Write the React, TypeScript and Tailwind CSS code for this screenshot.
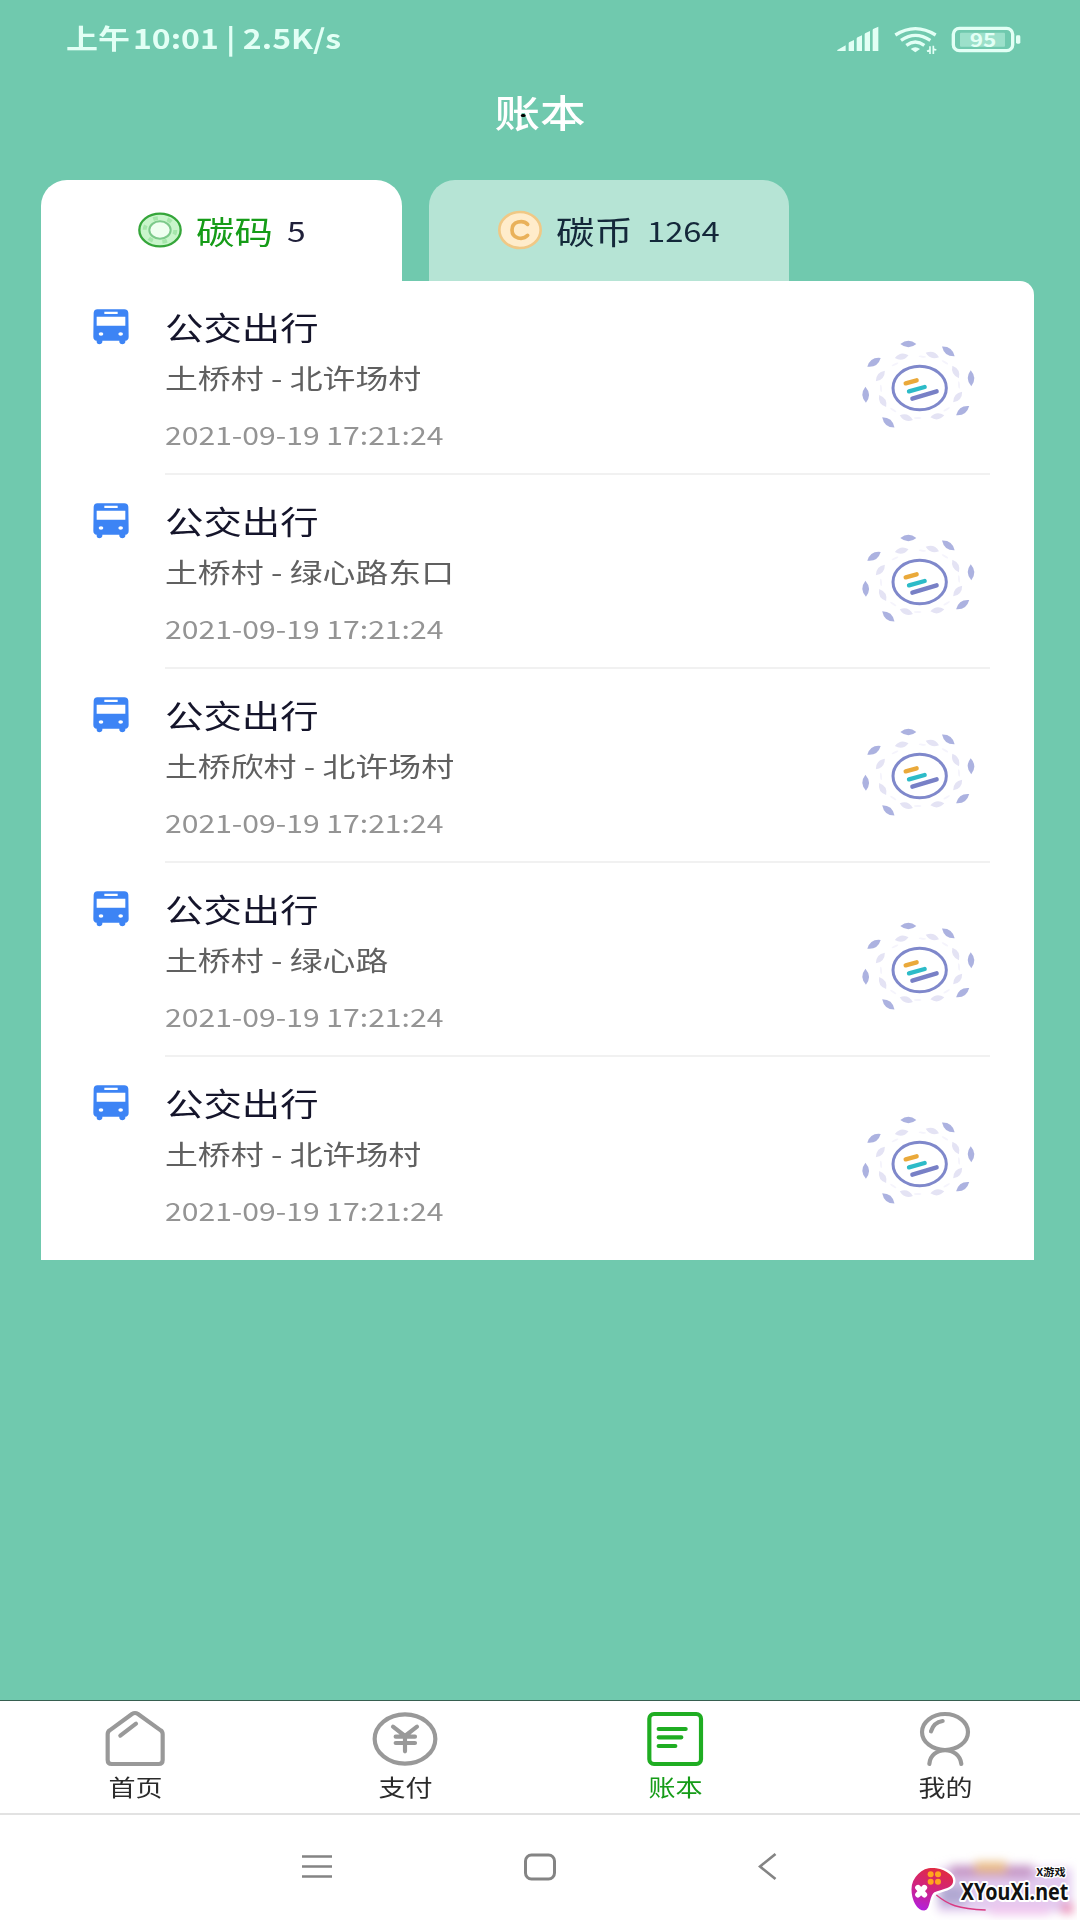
import React from "react";

const FONT = "font-['Noto_Sans_CJK_SC','Noto_Sans',sans-serif]";

function Wide({ className = "", children }: { className?: string; children: React.ReactNode }) {
  return <span className={`block w-max whitespace-nowrap origin-left scale-x-[1.2] ${className}`}>{children}</span>;
}

function StatusBar() {
  return (
    <header className="flex h-[80px] items-start text-[#e2fff5]">
      <div className="ml-[66px] mt-[18px] w-[771px] text-[27px] leading-[40px] font-bold">
        <span className="block w-max origin-left scale-x-[1.185] whitespace-nowrap"><span className="mr-[2.5px]">上午</span>10:01 | 2.5K/s</span>
      </div>
      <svg className="mt-[26px] h-[26px] w-[42px]" viewBox="111 78 126 78" fill="currentColor">
        <path d="M112 150l25-14v17h-21q-6 0-4-3zM146 130q0-3 3-4l13-6v33h-16zM170 116q0-3 3-4l13-6v47h-16zM194 103q0-3 3-4l13-6v60h-16zM218 90q0-3 3-4l14-6v73h-17z" />
      </svg>
      <svg className="ml-[15px] mt-[26px] h-[30px] w-[44px]" viewBox="281 78 132 90" fill="none" stroke="currentColor" strokeWidth="10">
        <path d="M285 105Q345 67 406 105M302 121Q345 91 390 121M318 136Q345 116 372 136" />
        <path d="M331 147q14-10 28 0l-14 10z" fill="currentColor" stroke="none" />
        <path d="M389 139v23M399 137v25M380 154l9-4M399 147l9 3" strokeWidth="5" />
      </svg>
      <svg className="ml-[13px] mt-[26px] h-[28px] w-[70px]" viewBox="453 78 210 84" fill="none">
        <rect x="460" y="85" width="178" height="67" rx="18" stroke="currentColor" strokeWidth="10" />
        <rect x="480" y="98" width="135" height="42" rx="3" fill="#9ce0ca" />
        <rect x="648" y="106" width="13" height="25" rx="4" fill="currentColor" />
        <text x="549" y="140" textAnchor="middle" fontSize="55" fontWeight="700" textLength="80" lengthAdjust="spacingAndGlyphs" fill="currentColor" fontFamily="Noto Sans CJK SC">95</text>
      </svg>
    </header>
  );
}

function CarbonIcon() {
  return (
    <svg className="h-[38px] w-[46px]" viewBox="319 123 138 114" fill="none">
      <ellipse cx="388" cy="180" rx="62" ry="49" fill="#c9f5cb" stroke="#35a63a" strokeWidth="7" />
      <ellipse cx="388" cy="180" rx="46" ry="36" stroke="#a5e6aa" strokeWidth="12" strokeDasharray="14 29" />
      <ellipse cx="388" cy="180" rx="32" ry="26" fill="#effff0" stroke="#7cc98a" strokeWidth="6" />
    </svg>
  );
}

function CoinIcon() {
  return (
    <svg className="h-[40px] w-[46px]" viewBox="230 391 138 120" fill="none">
      <ellipse cx="299" cy="451" rx="62" ry="54" fill="#ffeccb" stroke="#f0c885" strokeWidth="8" />
      <path d="M322 434C308 420 275 424 275 451S308 482 322 467" stroke="#e9b15a" strokeWidth="11" strokeLinecap="round" />
    </svg>
  );
}

function BusIcon() {
  return (
    <svg className="h-[36px] w-[36px]" viewBox="69 54 108 108" fill="#3d84f5">
      <path d="M82 55h81q10 0 12 10l1 72q0 11-10 12v5q-2 6-9 6t-9-6v-5H97v5q-2 6-9 6t-8-6v-5q-10-1-10-12l1-72q2-10 11-10z" />
      <path d="M103 62h40v7h-40zM80 77h86v27H80z" fill="#fff" />
      <ellipse cx="93" cy="129" rx="7" ry="5" fill="#fff" />
      <ellipse cx="152" cy="129" rx="7" ry="5" fill="#fff" />
    </svg>
  );
}

const LEAVES = [
  [235, 72, 0], [355, 94, 38], [423, 175, 88], [398, 272, -35],
  [175, 307, 40], [107, 224, 88], [132, 127, -33],
];
const PALE = [
  [215, 110, -12], [307, 105, 18], [377, 156, 62], [383, 231, -50],
  [322, 289, -8], [229, 293, 20], [158, 243, 60], [151, 168, -50],
];
const DOTS = [[277, 110, 5], [195, 133, -25], [345, 127, 30], [387, 195, 85], [350, 268, -30], [263, 294, 0], [190, 270, 35], [153, 205, 85]];

function CarbonBadge() {
  return (
    <svg className="h-[100px] w-[130px]" viewBox="60 45 390 300" fill="none">
      {LEAVES.map(([x, y, r]) => (
        <path key={`${x}`} transform={`translate(${x} ${y}) rotate(${r})`} d="M-24 0Q0-20 24 0Q0 20-24 0z" fill="#acb2e0" />
      ))}
      {PALE.map(([x, y, r]) => (
        <path key={`${x}`} transform={`translate(${x} ${y}) rotate(${r})`} d="M-21 0Q0-18 21 0Q0 18-21 0z" fill="#e4e3f4" />
      ))}
      {DOTS.map(([x, y, r]) => (
        <ellipse key={`${x}`} transform={`translate(${x} ${y}) rotate(${r})`} rx="11" ry="3" fill="#f5f4fc" />
      ))}
      <ellipse cx="269" cy="204" rx="80" ry="65" stroke="#7f88cb" strokeWidth="9" fill="#fff" />
      <g strokeWidth="13" strokeLinecap="round">
        <path d="M227 190l33-9" stroke="#eaa93a" />
        <path d="M237 214l47-13" stroke="#2dbbc8" />
        <path d="M247 236l73-22" stroke="#7880c6" />
      </g>
    </svg>
  );
}

const ROUTES = ["土桥村 - 北许场村", "土桥村 - 绿心路东口", "土桥欣村 - 北许场村", "土桥村 - 绿心路", "土桥村 - 北许场村"];

function TripRow({ route, last }: { route: string; last: boolean }) {
  return (
    <li className="flex h-[194px] pl-[52px] pr-[44px]">
      <div className="w-[72px] pt-[27.5px]"><BusIcon /></div>
      <div className={`flex flex-1 justify-between border-b-2 ${last ? "border-transparent" : "border-[#f1f1f1]"}`}>
        <div className="pt-[25px]">
          <Wide className="text-[32px] leading-[40px] text-[#15152b]">公交出行</Wide>
          <Wide className="mt-[11px] text-[27.4px] leading-[40px] text-[#606060]">{route}</Wide>
          <Wide className="mt-[19px] text-[25.1px] leading-[36px] text-[#949494]">2021-09-19 17:21:24</Wide>
        </div>
        <div className="mr-[10px] pt-[54px]"><CarbonBadge /></div>
      </div>
    </li>
  );
}

const NAV = [
  {
    label: "首页",
    icon: (
      <g>
        <path d="M-82-14Q-82-22-76-26L-9-75Q0-81 9-75L77-26Q83-22 83-14V63Q83 75 71 75H-70Q-82 75-82 63z" />
        <path d="M-44-10L3-46" />
      </g>
    ),
  },
  {
    label: "支付",
    icon: (
      <g>
        <ellipse rx="91" ry="74" />
        <path d="M-36-37L0-9L36-37M0-9V37M-28-7H30M-28 12H30" />
      </g>
    ),
  },
  {
    label: "账本",
    icon: (
      <g>
        <rect x="-77" y="-75" width="155" height="150" rx="14" />
        <path d="M-49-30H32M-49-5H19M-49 21H1" />
      </g>
    ),
  },
  {
    label: "我的",
    icon: (
      <g>
        <ellipse cy="-21" rx="69" ry="54" />
        <path d="M-42-23Q-34-50-7-54M-47 75C-43 20 43 20 49 75" />
      </g>
    ),
  },
];

function TabBar() {
  return (
    <nav className="grid h-[115px] grid-cols-4 border-b-2 border-t border-b-[#e2e2e2] border-t-[#365f50] bg-white">
      {NAV.map(({ label, icon }) => {
        const active = label === "账本";
        return (
          <div key={label} className="flex flex-col items-center pt-[9px]">
            <svg
              className={`h-[58px] w-[72px] ${active ? "text-[#1fad22]" : "text-[#999]"}`}
              viewBox="-108 -87 216 174"
              fill="none"
              stroke="currentColor"
              strokeWidth="12.5"
              strokeLinecap="round"
              strokeLinejoin="round"
            >
              {icon}
            </svg>
            <span className={`ml-[2px] mt-[2px] block scale-x-[1.2] text-[22.5px] leading-[32px] ${active ? "text-[#169c18]" : "text-[#2b2b2b]"}`}>{label}</span>
          </div>
        );
      })}
    </nav>
  );
}

function SystemBar() {
  return (
    <footer className="flex h-[105px] items-start bg-white text-[#848484]">
      <svg className="ml-[301px] mt-[36px] h-[32px] w-[32px]" viewBox="0 0 32 32" stroke="currentColor" strokeWidth="2.6">
        <path d="M1 5.5H31M1 15.5H31M1 25.5H31" />
      </svg>
      <svg className="ml-[190px] mt-[36px] h-[32px] w-[34px]" viewBox="0 0 34 32" fill="none" stroke="currentColor" strokeWidth="3">
        <rect x="2.5" y="4" width="29" height="24" rx="6" />
      </svg>
      <svg className="ml-[201px] mt-[36px] h-[32px] w-[20px]" viewBox="0 0 20 32" fill="none" stroke="currentColor" strokeWidth="2.7">
        <path d="M17.5 3L2 15.5L17.5 28" />
      </svg>
      <div className="ml-[127px] mt-[36px] h-[69px] w-[172px]">
        <svg className="h-[69px] w-[172px]" viewBox="76 33 516 207">
          <defs>
            <linearGradient id="pad" x1="0.6" y1="0" x2="0.3" y2="1">
              <stop offset="0" stopColor="#e22c3d" />
              <stop offset="0.5" stopColor="#d02380" />
              <stop offset="1" stopColor="#b11fe0" />
            </linearGradient>
            <filter id="soft" x="-30%" y="-60%" width="160%" height="220%"><feGaussianBlur stdDeviation="14" /></filter>
          </defs>
          <g filter="url(#soft)">
            <rect x="175" y="85" width="400" height="130" fill="#e2caef" />
            <rect x="210" y="76" width="250" height="38" fill="#c596c6" />
            <rect x="285" y="65" width="95" height="35" fill="#e9bc87" />
            <rect x="180" y="135" width="80" height="60" fill="#b0a8d2" />
            <rect x="330" y="195" width="180" height="30" fill="#f0c6ee" />
            <rect x="545" y="190" width="35" height="30" fill="#e98bb5" />
          </g>
          <path d="M170 165C205 194 235 207 318 210" stroke="#d93a82" strokeWidth="4" fill="none" />
          <path d="M92 148C92 110 126 80 158 80C190 82 224 98 224 122C224 150 186 150 166 160C150 170 158 213 134 215C108 215 92 180 92 148z" fill="url(#pad)" stroke="#fff" strokeWidth="7" />
          <g fill="#ffa51e"><circle cx="153" cy="103" r="9" /><circle cx="175" cy="103" r="9" /><circle cx="153" cy="125" r="9" /><circle cx="175" cy="125" r="9" /></g>
          <path d="M115 143L134 164M134 143L115 164" stroke="#fff" strokeWidth="17" strokeLinecap="round" />
          <g fill="#111" stroke="#fff" strokeLinejoin="round" style={{ paintOrder: "stroke" }} fontWeight="700">
            <text x="243" y="180" fontSize="69" textLength="323" lengthAdjust="spacingAndGlyphs" strokeWidth="12" fontFamily="Noto Sans, sans-serif">XYouXi.net</text>
            <text x="470" y="109" fontSize="31" textLength="88" lengthAdjust="spacingAndGlyphs" strokeWidth="8" fontFamily="Noto Sans CJK SC, sans-serif">X游戏</text>
          </g>
        </svg>
      </div>
    </footer>
  );
}

export default function App() {
  return (
    <div className={`flex h-[1920px] w-[1080px] flex-col overflow-hidden bg-[#70c9ae] ${FONT}`}>
      <StatusBar />
      <div className="flex h-[100px] justify-center pt-[6px]">
        <h1 className="relative h-[50px] scale-x-[1.2] text-[38px] font-medium leading-[50px] text-white">
          账本
          <i className="absolute left-[21.5px] top-[28px] h-[3px] w-[4px] rounded-full bg-black" />
        </h1>
      </div>
      <div className="flex gap-[27px] pl-[41px] text-[32px]">
        <div className="flex h-[102px] w-[361px] items-center rounded-t-[26px] bg-white pb-[2px] pl-[96px]">
          <CarbonIcon />
          <div className="ml-[13px] w-[91px]"><Wide className="text-[#169c18]">碳码</Wide></div>
          <Wide className="text-[28px] text-[#20203a]">5</Wide>
        </div>
        <div className="flex h-[102px] w-[360px] items-center rounded-t-[26px] bg-[#b6e4d5] pb-[2px] pl-[68px] text-[#14283a]">
          <CoinIcon />
          <div className="ml-[13px] w-[91px]"><Wide>碳币</Wide></div>
          <span className="block origin-left scale-x-[1.17] text-[28px]">1264</span>
        </div>
      </div>
      <ul className="-mt-px ml-[41px] h-[979px] w-[993px] rounded-tr-[14px] bg-white">
        {ROUTES.map((route, i) => (
          <TripRow key={i} route={route} last={i === ROUTES.length - 1} />
        ))}
      </ul>
      <div className="flex-1" />
      <TabBar />
      <SystemBar />
    </div>
  );
}
